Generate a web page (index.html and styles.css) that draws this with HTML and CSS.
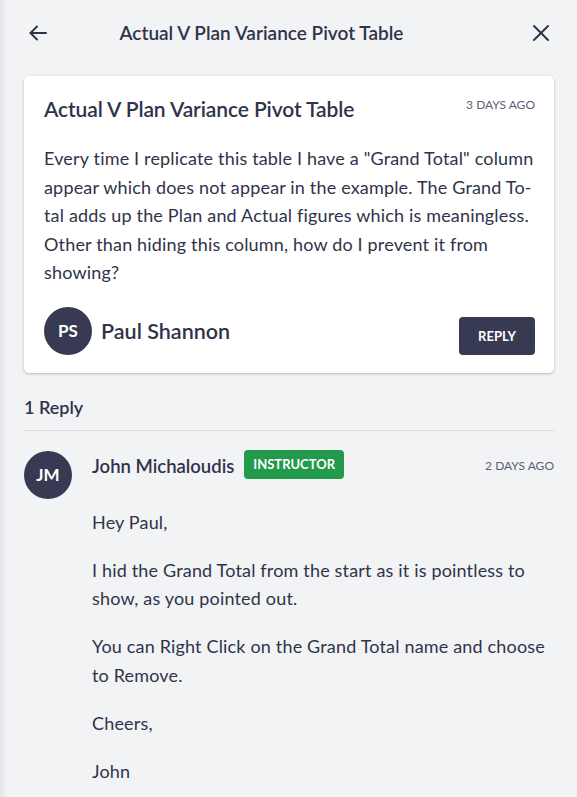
FILE: index.html
```html
<!DOCTYPE html>
<html lang="en">
<head>
<meta charset="utf-8">
<title>Actual V Plan Variance Pivot Table</title>
<link rel="stylesheet" href="styles.css">
</head>
<body>
<div class="drawer">
  <header class="topbar">
    <button class="icon-btn" aria-label="Back">
      <svg width="24" height="24" viewBox="0 0 24 24" fill="none" stroke="currentColor" stroke-width="2" stroke-linecap="round" stroke-linejoin="round"><path d="M20 12H4.5"/><path d="M11 5.5L4.5 12l6.5 6.5"/></svg>
    </button>
    <h1 class="topbar-title">Actual V Plan Variance Pivot Table</h1>
    <button class="icon-btn" aria-label="Close">
      <svg width="24" height="24" viewBox="0 0 24 24" fill="none" stroke="currentColor" stroke-width="2" stroke-linecap="round"><path d="M5 5l14 14"/><path d="M19 5L5 19"/></svg>
    </button>
  </header>

  <article class="card">
    <div class="card-head">
      <h2 class="card-title">Actual V Plan Variance Pivot Table</h2>
      <span class="time">3 DAYS AGO</span>
    </div>
    <p class="card-body">Every time I replicate this table I have a "Grand Total" column appear which does not appear in the example. The Grand To&shy;tal adds up the Plan and Actual figures which is meaningless. Other than hiding this column, how do I prevent it from showing?</p>
    <div class="card-foot">
      <div class="author">
        <span class="avatar">PS</span>
        <span class="author-name">Paul Shannon</span>
      </div>
      <button class="reply-btn">REPLY</button>
    </div>
  </article>

  <h3 class="replies-head">1 Reply</h3>

  <div class="reply">
    <span class="avatar">JM</span>
    <div class="reply-main">
      <div class="reply-head">
        <span class="reply-name">John Michaloudis</span>
        <span class="badge">INSTRUCTOR</span>
        <span class="time push">2 DAYS AGO</span>
      </div>
      <div class="reply-body">
        <p>Hey Paul,</p>
        <p>I hid the Grand Total from the start as it is pointless to show, as you pointed out.</p>
        <p>You can Right Click on the Grand Total name and choose to Remove.</p>
        <p>Cheers,</p>
        <p>John</p>
      </div>
    </div>
  </div>
</div>
</body>
</html>
```

FILE: styles.css
```css
* { box-sizing: border-box; }

html, body {
  margin: 0;
  height: 100%;
}

body {
  background: linear-gradient(to right, #e4e5e8 0, #eeeff1 5px, #f2f3f5 9px);
  color: #30334a;
  font-family: "Lato", "Noto Sans", sans-serif;
  overflow: hidden;
}

.drawer {
  padding: 0 23px 0 24px;
}

.topbar {
  height: 66px;
  display: flex;
  align-items: center;
  justify-content: space-between;
}

.icon-btn {
  border: 0;
  background: none;
  padding: 0;
  width: 24px;
  height: 24px;
  color: #30334a;
  display: flex;
  flex: none;
}

.icon-btn:first-child { margin-left: 2px; }
.icon-btn:last-child { margin-right: 1px; }

.topbar-title {
  flex: 1;
  margin: 0 0 2px;
  padding-right: 56px;
  text-align: center;
  font-size: 19px;
  font-weight: 600;
}

.card {
  margin-top: 10px;
  background: #fff;
  border-radius: 5px;
  box-shadow: 0 1px 3px rgba(30, 33, 50, 0.28);
  padding: 19px 19px 18px 20px;
}

.card-head {
  display: flex;
  justify-content: space-between;
  align-items: flex-start;
}

.card-title {
  margin: 0;
  font-size: 21px;
  line-height: 28px;
  font-weight: 600;
  letter-spacing: -0.1px;
}

.time {
  font-size: 12px;
  color: #5d6175;
  line-height: 20px;
}

.card-body {
  margin: 21px 0 0;
  font-size: 18px;
  line-height: 28.5px;
  letter-spacing: 0.17px;
}

.card-foot {
  margin-top: 20px;
  display: flex;
  justify-content: space-between;
  align-items: flex-end;
}

.author {
  display: flex;
  align-items: center;
  gap: 9px;
}

.avatar {
  width: 48px;
  height: 48px;
  border-radius: 50%;
  background: #373a52;
  color: #fff;
  font-size: 17px;
  font-weight: 700;
  display: flex;
  align-items: center;
  justify-content: center;
  flex: none;
}

.author-name {
  font-size: 21.5px;
  font-weight: 600;
}

.reply-btn {
  width: 76px;
  height: 38px;
  border: 0;
  border-radius: 4px;
  background: #373a52;
  color: #fff;
  font-family: inherit;
  font-size: 13px;
  font-weight: 700;
}

.replies-head {
  margin: 22px 0 0;
  font-size: 18px;
  line-height: 24px;
  font-weight: 600;
  padding-bottom: 11px;
  border-bottom: 1px solid #dcdde1;
}

.reply {
  margin-top: 20px;
  display: flex;
  gap: 20px;
}

.reply-main { flex: 1; }

.reply-head {
  display: flex;
  align-items: center;
  gap: 10px;
  height: 29px;
  margin-top: -1px;
}

.reply-name {
  font-size: 18.5px;
  font-weight: 600;
  margin-top: 3px;
}

.badge {
  background: #22994b;
  color: #fff;
  font-size: 13px;
  font-weight: 700;
  height: 29px;
  line-height: 29px;
  padding: 0 9px;
  border-radius: 4px;
}

.push {
  margin-left: auto;
  margin-top: 3px;
}

.reply-body {
  margin-top: 29px;
  font-size: 18px;
  line-height: 28.5px;
  letter-spacing: 0.17px;
}

.reply-body p {
  margin: 0 0 19.5px;
}
```
